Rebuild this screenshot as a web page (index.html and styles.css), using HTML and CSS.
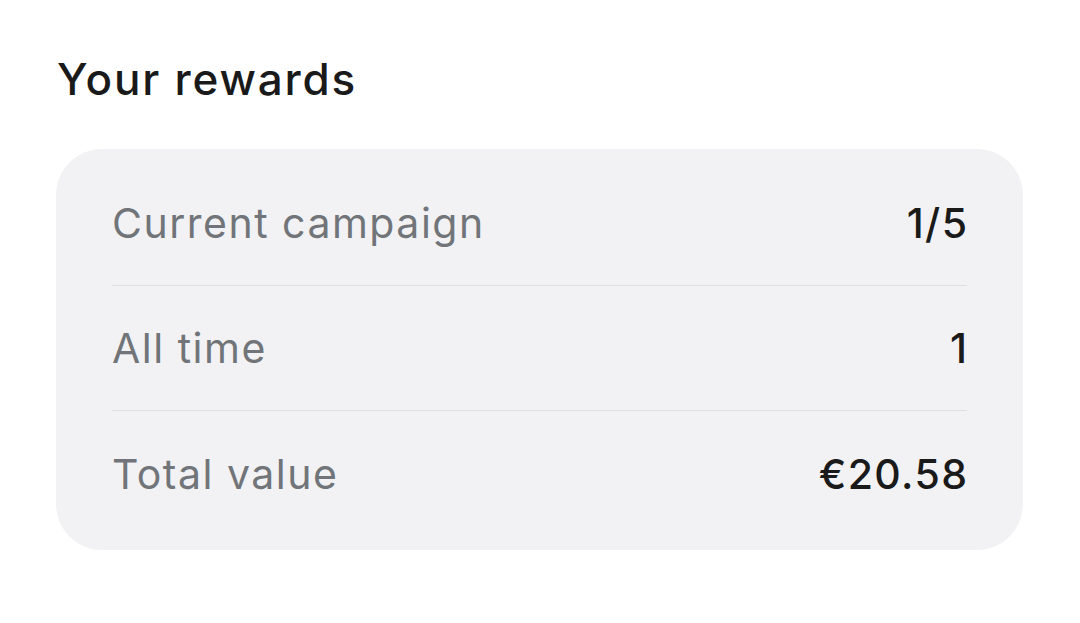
FILE: index.html
```html
<!DOCTYPE html>
<html lang="en">
<head>
    <meta charset="UTF-8">
    <meta name="viewport" content="width=device-width, initial-scale=1.0">
    <title>Your rewards</title>
    <link rel="stylesheet" href="styles.css">
</head>
<body>
    <section class="rewards">
        <h1>Your rewards</h1>
        <div class="card">
            <div class="row">
                <span class="label">Current campaign</span>
                <span class="value">1/5</span>
            </div>
            <div class="row">
                <span class="label">All time</span>
                <span class="value">1</span>
            </div>
            <div class="row">
                <span class="label">Total value</span>
                <span class="value">€20.58</span>
            </div>
        </div>
    </section>
</body>
</html>
```

FILE: styles.css
```css
:root {
    --text-color: #1a1a1a;
    --muted-color: #717579;
    --card-bg: #f2f2f4;
    --divider: #dfdfe2;
}

* {
    margin: 0;
    padding: 0;
    box-sizing: border-box;
    font-family: Inter, 'Noto Sans', sans-serif;
}

body {
    background-color: #ffffff;
    color: var(--text-color);
}

.rewards {
    padding: 50px 57px 0 56px;
}

h1 {
    font-size: 44px;
    font-weight: 500;
    line-height: 58px;
    letter-spacing: 1.8px;
    margin-bottom: 41px;
    padding-left: 1px;
}

.card {
    background-color: var(--card-bg);
    border-radius: 46px;
    padding: 12px 56px 14px;
}

.row {
    display: flex;
    justify-content: space-between;
    align-items: center;
    height: 125px;
    border-bottom: 1px solid var(--divider);
    font-size: 41px;
}

.row:last-child {
    border-bottom: none;
}

.label {
    color: var(--muted-color);
    font-weight: 400;
    letter-spacing: 1.5px;
}

.value {
    font-weight: 500;
    letter-spacing: 1.4px;
    margin-right: -1.4px;
}
```
